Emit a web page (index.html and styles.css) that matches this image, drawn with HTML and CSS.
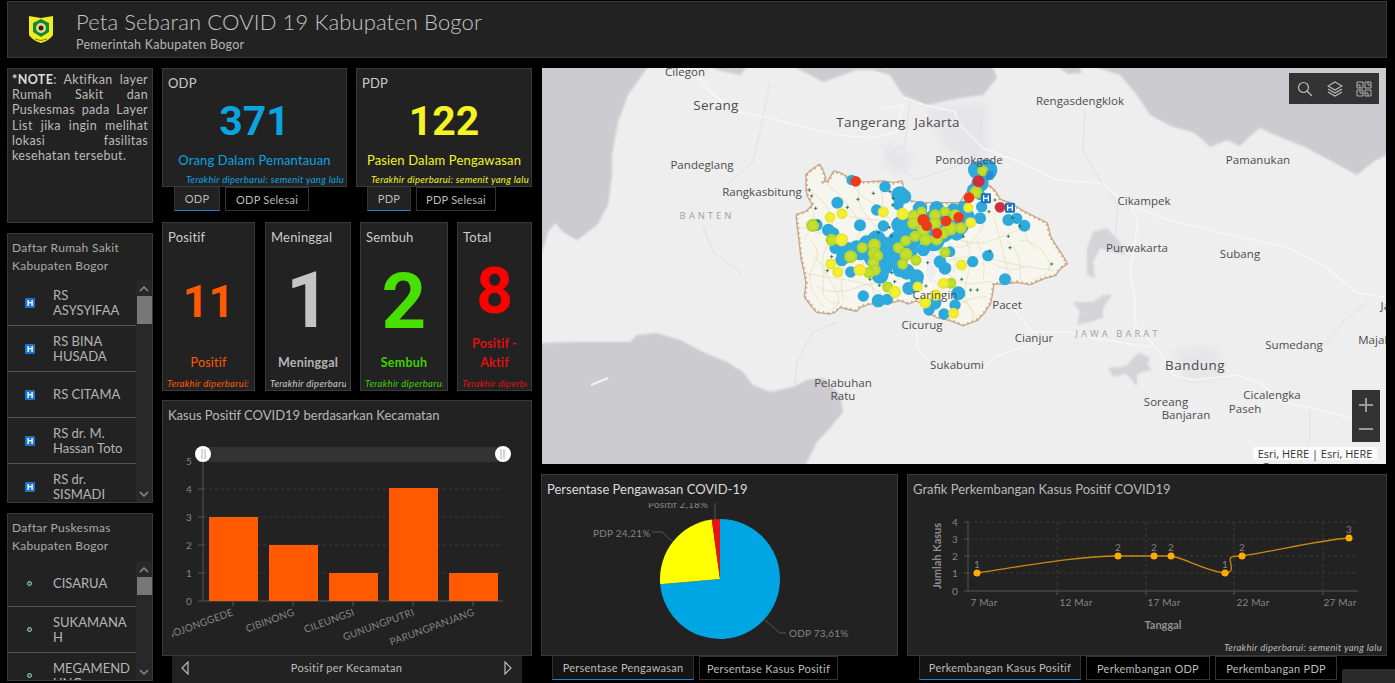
FILE: index.html
```html
<!DOCTYPE html>
<html lang="id">
<head>
<meta charset="utf-8">
<title>Peta Sebaran COVID 19 Kabupaten Bogor</title>
<link rel="stylesheet" href="styles.css">
</head>
<body>
<div class="page">
  <header class="header">
    <svg class="logo" viewBox="0 0 24 29" width="24" height="29">
      <path d="M0 1 L12 3 L24 1 L24 20 Q21 25 12 28 Q3 25 0 20 Z" fill="#f4ec1e"/>
      <path d="M12 4 L20 8 L20 17 L12 22 L4 17 L4 8 Z" fill="#0f8a3c"/>
      <circle cx="12" cy="13" r="5" fill="#e8d98a"/>
      <circle cx="12" cy="13" r="2.5" fill="#33261a"/>
      <path d="M6 24 Q12 27 18 24" stroke="#7a7a1e" stroke-width="1" fill="none"/>
    </svg>
    <div class="header-text">
      <div class="header-title">Peta Sebaran COVID 19 Kabupaten Bogor</div>
      <div class="header-sub">Pemerintah Kabupaten Bogor</div>
    </div>
  </header>
  <main class="main">
    <section class="col-left">
      <div class="panel note"><b>*NOTE</b>: Aktifkan layer Rumah Sakit dan Puskesmas pada Layer List jika ingin melihat lokasi fasilitas kesehatan tersebut.</div>
      <div class="panel list hospital">
        <div class="list-title">Daftar Rumah Sakit Kabupaten Bogor</div>
        <div class="list-body">
          <div class="list-items">
            <div class="item first"><span class="h-icon">H</span><span class="item-text">RS ASYSYIFAA</span></div>
            <div class="item"><span class="h-icon">H</span><span class="item-text">RS BINA HUSADA</span></div>
            <div class="item"><span class="h-icon">H</span><span class="item-text">RS CITAMA</span></div>
            <div class="item"><span class="h-icon">H</span><span class="item-text">RS dr. M. Hassan Toto</span></div>
            <div class="item"><span class="h-icon">H</span><span class="item-text">RS dr. SISMADI</span></div>
          </div>
          <div class="scrollbar">
            <svg class="sb-arrow" viewBox="0 0 10 6" width="10" height="6"><path d="M1 5 L5 1 L9 5" stroke="#888" stroke-width="1.6" fill="none"/></svg>
            <div class="thumb thumb-h"></div>
            <svg class="sb-arrow bottom" viewBox="0 0 10 6" width="10" height="6"><path d="M1 1 L5 5 L9 1" stroke="#888" stroke-width="1.6" fill="none"/></svg>
          </div>
        </div>
      </div>
      <div class="panel list puskesmas">
        <div class="list-title">Daftar Puskesmas Kabupaten Bogor</div>
        <div class="list-body">
          <div class="list-items">
            <div class="item first"><span class="p-icon"></span><span class="item-text">CISARUA</span></div>
            <div class="item"><span class="p-icon"></span><span class="item-text">SUKAMANAH</span></div>
            <div class="item"><span class="p-icon"></span><span class="item-text">MEGAMENDUNG</span></div>
          </div>
          <div class="scrollbar">
            <svg class="sb-arrow" viewBox="0 0 10 6" width="10" height="6"><path d="M1 5 L5 1 L9 5" stroke="#888" stroke-width="1.6" fill="none"/></svg>
            <div class="thumb thumb-p"></div>
            <svg class="sb-arrow bottom" viewBox="0 0 10 6" width="10" height="6"><path d="M1 1 L5 5 L9 1" stroke="#888" stroke-width="1.6" fill="none"/></svg>
          </div>
        </div>
      </div>
    </section>

    <section class="col-mid">
      <div class="kpi-row">
        <div class="kpi kpi-odp">
          <div class="panel kpi-card">
            <div class="card-title">ODP</div>
            <div class="kpi-num c-blue">371</div>
            <div class="kpi-label c-blue">Orang Dalam Pemantauan</div>
            <div class="foot c-blue r">Terakhir diperbarui: semenit yang lalu</div>
          </div>
          <div class="tabs t-odp"><span class="tab active w46">ODP</span><span class="tab w84">ODP Selesai</span></div>
        </div>
        <div class="kpi kpi-pdp">
          <div class="panel kpi-card">
            <div class="card-title">PDP</div>
            <div class="kpi-num c-yellow">122</div>
            <div class="kpi-label c-yellow">Pasien Dalam Pengawasan</div>
            <div class="foot c-yellow r">Terakhir diperbarui: semenit yang lalu</div>
          </div>
          <div class="tabs t-pdp"><span class="tab active w44">PDP</span><span class="tab w80">PDP Selesai</span></div>
        </div>
      </div>
      <div class="stat-row">
        <div class="panel stat s1">
          <div class="card-title">Positif</div>
          <div class="stat-num n1 c-orange">11</div>
          <div class="stat-label c-orange">Positif</div>
          <div class="foot c-orange">Terakhir diperbarui: semenit yang lalu</div>
        </div>
        <div class="panel stat s2">
          <div class="card-title">Meninggal</div>
          <div class="stat-num n2 c-grey">1</div>
          <div class="stat-label bold c-grey2">Meninggal</div>
          <div class="foot c-white">Terakhir diperbarui: semenit yang lalu</div>
        </div>
        <div class="panel stat s3">
          <div class="card-title">Sembuh</div>
          <div class="stat-num n3 c-green">2</div>
          <div class="stat-label bold c-green2">Sembuh</div>
          <div class="foot c-green2">Terakhir diperbarui: semenit yang lalu</div>
        </div>
        <div class="panel stat s4">
          <div class="card-title">Total</div>
          <div class="stat-num n4 c-red">8</div>
          <div class="stat-label bold c-red2">Positif - Aktif</div>
          <div class="foot c-red2">Terakhir diperbarui: semenit yang lalu</div>
        </div>
      </div>
      <div class="panel bar-panel">
        <div class="chart-title">Kasus Positif COVID19 berdasarkan Kecamatan</div>
        <svg class="chart" viewBox="163 440 368 215" width="368" height="215">
          <rect x="203" y="447" width="300" height="15" fill="#333"/>
          <g class="grid">
            <path d="M203 489H503M203 517H503M203 545H503M203 573H503"/>
          </g>
          <path d="M203 462V601H503" stroke="#555" fill="none"/>
          <path d="M198 461H203M198 489H203M198 517H203M198 545H203M198 573H203M198 601H203M233 601v5M293 601v5M353 601v5M413 601v5M473 601v5" stroke="#555" fill="none"/>
          <g fill="#ff5a00">
            <rect x="209" y="517" width="49" height="84"/>
            <rect x="269" y="545" width="49" height="56"/>
            <rect x="329" y="573" width="49" height="28"/>
            <rect x="389" y="488" width="49" height="113"/>
            <rect x="449" y="573" width="49" height="28"/>
          </g>
          <g class="axis-label end">
            <text x="192" y="465">5</text><text x="192" y="493">4</text><text x="192" y="521">3</text><text x="192" y="549">2</text><text x="192" y="577">1</text><text x="192" y="605">0</text>
          </g>
          <clipPath id="barclip"><rect x="172" y="600" width="350" height="50"/></clipPath>
          <g class="axis-label end" clip-path="url(#barclip)">
            <text transform="translate(234 615) rotate(-20)">BOJONGGEDE</text>
            <text transform="translate(295 615) rotate(-20)">CIBINONG</text>
            <text transform="translate(355 615) rotate(-20)">CILEUNGSI</text>
            <text transform="translate(415 615) rotate(-20)">GUNUNGPUTRI</text>
            <text transform="translate(475 615) rotate(-20)">PARUNGPANJANG</text>
          </g>
          <circle cx="203" cy="454" r="8" fill="#fff"/>
          <circle cx="503" cy="454" r="8" fill="#fff"/>
          <path d="M202 449v10M205 449v10M501 449v10M504 449v10" stroke="#aaa"/>
        </svg>
      </div>
      <div class="bar-foot">
        <svg viewBox="0 0 10 14" width="10" height="14"><path d="M8 1 L2 7 L8 13 Z" stroke="#bbb" stroke-width="1.2" fill="none"/></svg>
        <span class="bar-foot-text">Positif per Kecamatan</span>
        <svg viewBox="0 0 10 14" width="10" height="14"><path d="M2 1 L8 7 L2 13 Z" stroke="#bbb" stroke-width="1.2" fill="none"/></svg>
      </div>
    </section>

    <section class="col-right">
      <div class="map">
        <svg class="map-svg" viewBox="542 68 844 396" width="844" height="396">
          <defs>
            <filter id="soft" x="-5%" y="-5%" width="110%" height="110%"><feGaussianBlur stdDeviation="0.8"/></filter>
            <filter id="softer" x="-20%" y="-20%" width="140%" height="140%"><feGaussianBlur stdDeviation="4"/></filter>
          </defs>
          <rect x="542" y="68" width="844" height="396" fill="#eeeeef"/>
          <g class="urban" filter="url(#softer)">
            <path d="M885 145 Q900 140 915 160 L900 175 L885 165 Z"/>
            <path d="M925 110 L985 100 L990 150 L975 165 L945 150 Z"/>
            <path d="M1175 350 L1215 345 L1225 378 L1185 382 Z"/>
          </g>
          <g class="water" filter="url(#soft)">
            <path d="M535 60 L650 60 L647 68 L628 95 L618 122 L612 155 L612 175 L608 205 L597 225 L577 240 L563 232 L555 223 L548 232 L542 252 L535 260 Z"/>
            <path d="M535 343 L573 342 L600 342 L630 342 L637 335 L657 333 L680 340 L703 352 L727 362 L743 372 L753 385 L770 392 L793 387 L807 380 L823 378 L840 395 L843 412 L830 428 L817 442 L803 470 L535 470 Z"/>
            <path d="M797 60 L797 68 L823 82 L857 70 L873 70 L890 75 L903 95 L927 105 L960 98 L983 95 L997 78 L990 60 Z"/>
            <path d="M713 60 L713 68 L722 71 L740 75 L752 60 Z"/>
            <path d="M1060 60 L1060 68 L1068 74 L1082 73 L1076 60 Z"/>
            <path d="M1098 60 L1098 68 L1120 75 L1137 95 L1150 115 L1173 127 L1193 132 L1203 140 L1210 147 L1227 140 L1240 146 L1250 136 L1260 128 L1280 137 L1307 148 L1333 162 L1357 175 L1373 162 L1392 152 L1392 60 Z"/>
          </g>
          <g class="lake" filter="url(#soft)">
            <path d="M1093 232 L1107 228 L1120 242 L1125 255 L1117 253 L1100 248 L1093 262 L1095 278 L1087 275 L1087 248 Z"/>
            <path d="M1073 302 L1093 302 L1103 295 L1112 295 L1103 308 L1103 318 L1090 322 L1077 325 L1080 312 Z"/>
            <path d="M1108 368 L1120 367 L1127 365 L1135 356 L1140 353 L1150 358 L1147 364 L1152 370 L1142 372 L1137 375 L1137 387 L1130 378 L1125 374 L1113 377 Z"/>
          </g>
          <path class="islet" d="M591 385 L608 378"/>
          <g class="border-line">
            <path d="M770 82 L760 132 L753 162 L730 182"/>
            <path d="M703 225 L713 252 L740 272 L741 275"/>
            <path d="M837 322 L813 332 L797 362 L795 385"/>
            <path d="M1085 110 L1083 150 L1100 180 L1118 205 L1115 235"/>
            <path d="M1320 350 L1345 320 L1370 300"/>
            <path d="M1310 410 L1310 440 L1300 464"/>
            <path d="M910 100 L905 145 L885 155 L915 180 L975 160 L983 110"/>
          </g>
          <g class="road">
            <path d="M700 78 L710 92 L737 112 L767 117 L807 128 L840 135 L873 138 L897 132 L903 105 L880 109 M903 98 L925 105 L955 112 L960 125 L983 148"/>
            <path d="M983 148 L1020 162 L1057 180 L1100 183 L1130 205 L1167 220 L1203 228 L1243 238 L1287 247 L1323 265 L1357 293 L1386 297"/>
            <path d="M1130 205 L1138 222 L1130 272 L1135 298 L1135 325 L1157 348 L1173 375 L1193 380 L1237 375 L1263 385 L1283 402 L1313 408 L1350 418"/>
            <path d="M1010 305 L1032 332 L1070 332 L1093 338 L1157 348"/>
            <path d="M1027 345 L993 358 L980 372"/>
            <path d="M917 332 L917 348 L930 362"/>
          </g>
          <g class="region" transform="translate(760 140) scale(.33333)">
            <path id="bogor" class="region-shape" d="M140 105 L150 95 L178 75 L187 90 L195 115 L188 127 L205 125 L222 95 L240 100 L255 108 L270 125 L290 128 L330 127 L370 125 L400 130 L425 125 L430 150 L432 180 L480 190 L600 190 L640 130 L690 140 L705 155 L720 180 L750 190 L790 215 L830 235 L860 250 L870 290 L885 315 L905 345 L920 370 L900 385 L885 405 L850 415 L810 432 L770 425 L730 430 L700 430 L695 465 L690 490 L670 520 L650 540 L610 555 L570 540 L530 530 L500 515 L490 495 L470 480 L445 490 L420 480 L380 490 L330 490 L300 500 L290 512 L260 505 L240 500 L225 515 L210 520 L170 515 L150 490 L135 470 L140 430 L135 400 L125 355 L120 310 L115 270 L110 225 L140 215 L160 195 L145 170 L140 150 Z"/>
            <use href="#bogor" class="region-dash"/>
            <path class="city-hole" d="M465 320 L510 325 L545 360 L530 405 L510 440 L495 400 L500 360 Z"/>
            <g class="district">
              <path d="M140 150 Q190 170 210 220 T200 320 T215 430 T210 510"/>
              <path d="M190 125 Q230 150 260 190 T300 250 T270 340 T250 480"/>
              <path d="M270 125 Q300 170 340 190 T400 260"/>
              <path d="M115 260 Q170 280 230 290 T330 420 T330 490"/>
              <path d="M135 400 Q190 410 260 420 T350 450 T420 480"/>
              <path d="M600 300 Q650 320 700 300 T800 260"/>
              <path d="M570 360 Q640 340 710 360 T880 390"/>
              <path d="M620 300 Q640 360 620 420 T650 530"/>
              <path d="M700 230 Q720 290 730 340 T760 430"/>
              <path d="M560 400 Q610 440 650 430 T700 430"/>
              <path d="M520 420 Q560 470 600 480 T640 540"/>
              <path d="M460 470 Q520 500 560 530"/>
              <path d="M780 300 Q830 300 860 350 T820 420"/>
              <path d="M680 190 Q680 250 650 290 T580 320"/>
              <path d="M240 220 Q300 240 350 240 T420 300"/>
              <path d="M160 350 Q200 370 190 430 T240 490"/>
              <path d="M130 300 Q170 250 160 210"/>
              <path d="M170 440 Q220 470 300 440 T400 470"/>
              <path d="M300 130 Q280 190 330 240 T320 300"/>
              <path d="M350 130 Q380 170 360 220"/>
              <path d="M650 300 Q680 360 670 420"/>
              <path d="M740 300 Q790 340 780 420"/>
              <path d="M590 500 Q620 470 680 470"/>
              <path d="M560 300 Q600 340 580 400"/>
              <path d="M800 240 Q780 290 830 330"/>
              <path d="M700 370 Q740 400 800 380"/>
              <path d="M150 300 Q190 330 160 380 T190 500"/>
            </g>
            <g class="c-b">
              <circle cx="275" cy="120" r="12"/><circle cx="375" cy="140" r="13"/><circle cx="232" cy="188" r="14"/><circle cx="420" cy="165" r="22"/><circle cx="432" cy="170" r="18"/><circle cx="415" cy="195" r="12"/><circle cx="350" cy="210" r="13"/><circle cx="300" cy="256" r="14"/><circle cx="370" cy="258" r="13"/><circle cx="170" cy="255" r="14"/><circle cx="205" cy="270" r="15"/><circle cx="220" cy="280" r="14"/><circle cx="225" cy="325" r="13"/><circle cx="245" cy="360" r="15"/><circle cx="262" cy="330" r="20"/><circle cx="290" cy="325" r="20"/><circle cx="320" cy="310" r="20"/><circle cx="350" cy="300" r="25"/><circle cx="380" cy="320" r="25"/><circle cx="380" cy="350" r="25"/><circle cx="375" cy="380" r="20"/><circle cx="360" cy="405" r="22"/><circle cx="410" cy="300" r="22"/><circle cx="420" cy="255" r="22"/><circle cx="450" cy="265" r="20"/><circle cx="460" cy="300" r="20"/><circle cx="430" cy="340" r="22"/><circle cx="420" cy="390" r="18"/><circle cx="470" cy="410" r="18"/><circle cx="480" cy="205" r="18"/><circle cx="530" cy="205" r="18"/><circle cx="580" cy="210" r="16"/><circle cx="610" cy="200" r="14"/><circle cx="480" cy="260" r="45"/><circle cx="540" cy="255" r="50"/><circle cx="590" cy="250" r="35"/><circle cx="490" cy="330" r="15"/><circle cx="540" cy="365" r="15"/><circle cx="555" cy="385" r="15"/><circle cx="570" cy="335" r="12"/><circle cx="660" cy="235" r="14"/><circle cx="665" cy="200" r="13"/><circle cx="638" cy="365" r="13"/><circle cx="684" cy="347" r="13"/><circle cx="735" cy="418" r="14"/><circle cx="793" cy="257" r="14"/><circle cx="745" cy="240" r="14"/><circle cx="770" cy="235" r="13"/><circle cx="272" cy="396" r="13"/><circle cx="310" cy="468" r="13"/><circle cx="355" cy="482" r="16"/><circle cx="382" cy="478" r="13"/><circle cx="447" cy="445" r="16"/><circle cx="507" cy="510" r="13"/><circle cx="552" cy="522" r="13"/><circle cx="585" cy="495" r="13"/><circle cx="595" cy="460" r="17"/><circle cx="525" cy="490" r="15"/><circle cx="665" cy="100" r="25"/><circle cx="660" cy="130" r="22"/><circle cx="680" cy="90" r="28"/><circle cx="650" cy="90" r="22"/><circle cx="640" cy="150" r="15"/><circle cx="660" cy="165" r="12"/><circle cx="255" cy="345" r="22"/><circle cx="300" cy="335" r="22"/><circle cx="400" cy="360" r="25"/><circle cx="400" cy="330" r="25"/><circle cx="345" cy="350" r="30"/><circle cx="450" cy="330" r="20"/><circle cx="440" cy="395" r="20"/><circle cx="470" cy="425" r="15"/><circle cx="430" cy="280" r="25"/><circle cx="520" cy="300" r="30"/><circle cx="590" cy="280" r="18"/><circle cx="620" cy="230" r="20"/>
            </g>
            <g class="c-g">
              <circle cx="158" cy="256" r="16"/><circle cx="215" cy="300" r="15"/><circle cx="307" cy="323" r="13"/><circle cx="272" cy="350" r="16"/><circle cx="343" cy="315" r="16"/><circle cx="343" cy="340" r="16"/><circle cx="353" cy="347" r="13"/><circle cx="340" cy="368" r="14"/><circle cx="345" cy="390" r="14"/><circle cx="327" cy="398" r="14"/><circle cx="415" cy="323" r="13"/><circle cx="438" cy="343" r="16"/><circle cx="428" cy="372" r="13"/><circle cx="468" cy="361" r="13"/><circle cx="437" cy="302" r="13"/><circle cx="465" cy="289" r="13"/><circle cx="497" cy="299" r="15"/><circle cx="530" cy="298" r="15"/><circle cx="555" cy="337" r="13"/><circle cx="573" cy="430" r="13"/><circle cx="383" cy="441" r="13"/><circle cx="460" cy="228" r="15"/><circle cx="460" cy="250" r="15"/><circle cx="485" cy="215" r="12"/><circle cx="490" cy="270" r="16"/><circle cx="525" cy="225" r="14"/><circle cx="525" cy="250" r="15"/><circle cx="555" cy="215" r="12"/><circle cx="570" cy="265" r="18"/><circle cx="585" cy="225" r="14"/><circle cx="603" cy="264" r="14"/><circle cx="548" cy="280" r="15"/><circle cx="648" cy="157" r="16"/><circle cx="668" cy="92" r="13"/>
            </g>
            <g class="c-y">
              <circle cx="210" cy="232" r="13"/><circle cx="246" cy="221" r="13"/><circle cx="245" cy="299" r="16"/><circle cx="212" cy="372" r="13"/><circle cx="233" cy="396" r="13"/><circle cx="299" cy="390" r="15"/><circle cx="370" cy="216" r="13"/><circle cx="428" cy="222" r="15"/><circle cx="632" cy="248" r="13"/><circle cx="625" cy="203" r="12"/><circle cx="605" cy="375" r="13"/><circle cx="550" cy="430" r="13"/><circle cx="473" cy="440" r="12"/><circle cx="405" cy="456" r="15"/><circle cx="495" cy="487" r="15"/><circle cx="527" cy="465" r="14"/><circle cx="581" cy="520" r="13"/>
            </g>
            <g class="c-r">
              <circle cx="287" cy="124" r="13"/><circle cx="490" cy="240" r="15"/><circle cx="500" cy="257" r="13"/><circle cx="558" cy="243" r="13"/><circle cx="596" cy="232" r="13"/><circle cx="531" cy="280" r="13"/><circle cx="627" cy="173" r="13"/>
            </g>
            <g class="c-dr">
              <circle cx="656" cy="124" r="15"/><circle cx="720" cy="202" r="13"/>
            </g>
            <g class="plus">
              <path d="M148 150m-5 0h10m-5 -5v10M155 168m-5 0h10m-5 -5v10M167 205m-5 0h10m-5 -5v10M262 202m-5 0h10m-5 -5v10M294 178m-5 0h10m-5 -5v10M340 160m-5 0h10m-5 -5v10M390 155m-5 0h10m-5 -5v10M400 175m-5 0h10m-5 -5v10M398 195m-5 0h10m-5 -5v10M175 243m-5 0h10m-5 -5v10M355 278m-5 0h10m-5 -5v10M395 288m-5 0h10m-5 -5v10M215 350m-5 0h10m-5 -5v10M202 392m-5 0h10m-5 -5v10M330 418m-5 0h10m-5 -5v10M358 436m-5 0h10m-5 -5v10M395 398m-5 0h10m-5 -5v10M404 425m-5 0h10m-5 -5v10M498 438m-5 0h10m-5 -5v10M503 368m-5 0h10m-5 -5v10M610 290m-5 0h10m-5 -5v10M745 289m-5 0h10m-5 -5v10M750 323m-5 0h10m-5 -5v10M690 333m-5 0h10m-5 -5v10M605 418m-5 0h10m-5 -5v10M632 450m-5 0h10m-5 -5v10M652 450m-5 0h10m-5 -5v10M875 372m-5 0h10m-5 -5v10M687 215m-5 0h10m-5 -5v10M705 180m-5 0h10m-5 -5v10M758 233m-5 0h10m-5 -5v10M780 258m-5 0h10m-5 -5v10M388 262m-5 0h10m-5 -5v10"/>
            </g>
            <g class="h-mark">
              <rect x="678" y="92" width="22" height="28" rx="3" opacity=".5"/>
              <rect x="663" y="160" width="30" height="30" rx="3"/>
              <rect x="735" y="188" width="30" height="30" rx="3"/>
              <path d="M671 166v18M685 166v18M671 175h14M743 194v18M757 194v18M743 203h14"/>
            </g>
          </g>
          <g class="lbl">
            <text x="685" y="76">Cilegon</text>
            <text class="big" x="716" y="110">Serang</text>
            <text class="big" x="871" y="127">Tangerang</text>
            <text class="big" x="937" y="127">Jakarta</text>
            <text x="702" y="169">Pandeglang</text>
            <text x="762" y="196">Rangkasbitung</text>
            <text x="969" y="164">Pondokgede</text>
            <text x="1080" y="105">Rengasdengklok</text>
            <text x="1258" y="164">Pamanukan</text>
            <text x="1144" y="205">Cikampek</text>
            <text x="1137" y="252">Purwakarta</text>
            <text x="1240" y="258">Subang</text>
            <text x="1007" y="309">Pacet</text>
            <text x="1034" y="342">Cianjur</text>
            <text x="922" y="329">Cicurug</text>
            <text x="957" y="369">Sukabumi</text>
            <text x="935" y="299">Caringin</text>
            <text class="bigger" x="1195" y="370">Bandung</text>
            <text x="1294" y="349">Sumedang</text>
            <text x="1272" y="399">Cicalengka</text>
            <text x="1245" y="413">Paseh</text>
            <text x="1166" y="406">Soreang</text>
            <text x="1186" y="419">Banjaran</text>
            <text x="843" y="387">Pelabuhan</text>
            <text x="843" y="400">Ratu</text>
            <text x="1389" y="344">Majalengka</text>
            <text x="1408" y="310">Jatibarang</text>
            <text x="1277" y="471">Garut</text>
            <text class="region-lbl" x="707" y="219">BANTEN</text>
            <text class="region-lbl" x="1118" y="337">JAWA BARAT</text>
          </g>
        </svg>
        <div class="map-tools">
          <svg viewBox="0 0 16 16" width="16" height="16"><circle cx="6.5" cy="6.5" r="5" class="ico"/><path d="M10 10 L15 15" class="ico"/></svg>
          <svg viewBox="0 0 16 16" width="16" height="16"><path d="M8 1 L15 5 L8 9 L1 5 Z M1 8 L8 12 L15 8 M1 11 L8 15 L15 11" class="ico"/></svg>
          <svg viewBox="0 0 16 16" width="16" height="16"><path d="M1 1h6v6H1zM9 1h6v6H9zM1 9h6v6H1zM9 9h6v6H9zM1 4h3v3M12 1v3h3M4 9v3h3M9 12h3v3" class="ico thin"/></svg>
        </div>
        <div class="zoom-ctl">
          <svg viewBox="0 0 28 52" width="28" height="52"><path d="M14 8v14M7 15h14M7 39h14" stroke="#999" stroke-width="2" fill="none"/></svg>
        </div>
        <div class="attribution">Esri, HERE | Esri, HERE</div>
      </div>
      <div class="bottom-row">
        <div class="chart-block pie-block">
          <div class="panel bottom-panel">
            <div class="chart-title bright">Persentase Pengawasan COVID-19</div>
            <svg class="chart" viewBox="542 503 355 152" width="355" height="152">
              <path d="M720 579 L720 519 A60 60 0 1 1 660.2 584.2 Z" fill="#00a5e3"/>
              <path d="M720 579 L660.2 584.2 A60 60 0 0 1 711.8 519.6 Z" fill="#ffff00"/>
              <path d="M720 579 L711.8 519.6 A60 60 0 0 1 720 519 Z" fill="#ee1111"/>
              <path d="M715 503V520M652 532H662L672 541M765 620L780 633H786" stroke="#555" fill="none"/>
              <g class="axis-label">
                <text x="593" y="537">PDP 24,21%</text>
                <text x="789" y="637">ODP 73,61%</text>
                <text x="648" y="508">Positif 2,18%</text>
              </g>
            </svg>
          </div>
          <div class="tabs t-pie"><span class="tab active w142">Persentase Pengawasan</span><span class="tab w139">Persentase Kasus Positif</span></div>
        </div>
        <div class="chart-block line-block">
          <div class="panel bottom-panel">
            <div class="chart-title">Grafik Perkembangan Kasus Positif COVID19</div>
            <svg class="chart" viewBox="908 503 478 152" width="478" height="152">
              <path class="grid" d="M968 522H1358M968 539H1358M968 556H1358M968 573H1358M1057 522V591M1146 522V591M1234 522V591M1323 522V591"/>
              <path d="M968 522V591H1358" stroke="#555" fill="none"/>
              <path d="M964 522h4M964 539h4M964 556h4M964 573h4M964 591h4M1057 591v4M1146 591v4M1234 591v4M1323 591v4" stroke="#555" fill="none"/>
              <path d="M977 573 C1030 565 1080 556 1118 556 L1171 556 C1185 558 1205 571 1225 573 C1238 573 1226 558 1232 557 C1235 556 1238 556 1242 556 C1280 550 1320 540 1349 538" stroke="#c98a10" stroke-width="1.3" fill="none"/>
              <g fill="#ffab00">
                <circle cx="977" cy="573" r="3.5"/><circle cx="1118" cy="556" r="3.5"/><circle cx="1154" cy="556" r="3.5"/><circle cx="1171" cy="556" r="3.5"/><circle cx="1225" cy="573" r="3.5"/><circle cx="1242" cy="556" r="3.5"/><circle cx="1349" cy="538" r="3.5"/>
              </g>
              <g class="axis-label mid">
                <text x="977" y="568">1</text><text x="1118" y="551">2</text><text x="1154" y="551">2</text><text x="1171" y="551">2</text><text x="1225" y="568">1</text><text x="1242" y="551">2</text><text x="1349" y="533">3</text>
                <text x="984" y="606">7 Mar</text><text x="1076" y="606">12 Mar</text><text x="1164" y="606">17 Mar</text><text x="1253" y="606">22 Mar</text><text x="1340" y="606">27 Mar</text>
              </g>
              <g class="axis-label end">
                <text x="958" y="526">4</text><text x="958" y="543">3</text><text x="958" y="560">2</text><text x="958" y="577">1</text><text x="958" y="595">0</text>
              </g>
              <text class="axis-title" x="1163" y="629">Tanggal</text>
              <text class="axis-title" transform="translate(941 556) rotate(-90)">Jumlah Kasus</text>
              <text class="foot-svg" x="1382" y="651">Terakhir diperbarui: semenit yang lalu</text>
            </svg>
          </div>
          <div class="tabs t-line"><span class="tab active w162">Perkembangan Kasus Positif</span><span class="tab w124">Perkembangan ODP</span><span class="tab w122">Perkembangan PDP</span></div>
        </div>
      </div>
    </section>
  </main>
  <div class="corner-box"></div>
</div>
</body>
</html>
```
FILE: styles.css
```css
* { box-sizing: border-box; }
html, body { margin: 0; padding: 0; background: #000; }
body { font-family: "Lato", "Liberation Sans", sans-serif; color: #ccc; }
.page { position: relative; width: 1395px; height: 683px; overflow: hidden; padding: 1px 8px 0 7px; }
.panel { background: #222; border: 1px solid #3a3a3a; }

.header { height: 57px; background: #222; border: 1px solid #3a3a3a; display: flex; align-items: flex-start; margin-bottom: 10px; }
.logo { margin: 13px 0 0 21px; flex: none; }
.header-text { margin-left: 23px; }
.header-title { font-size: 22px; line-height: 26px; margin-top: 7px; font-weight: 300; letter-spacing: .12px; color: #c4c4c4; }
.header-sub { font-size: 12.5px; line-height: 16px; margin-top: 2px; letter-spacing: .25px; color: #b5b5b5; }

.main { display: grid; grid-template-columns: 146px 370px 846px; column-gap: 9px; height: 615px; }
.col-left { display: flex; flex-direction: column; gap: 10px; }
.note { height: 155px; padding: 3px 4px 0 4px; font-size: 12.5px; line-height: 15.2px; text-align: justify; letter-spacing: .35px; color: #bbb; }
.note b { color: #ddd; }
.list { display: flex; flex-direction: column; overflow: hidden; }
.hospital { height: 270px; }
.puskesmas { height: 168px; }
.list-title { padding: 5px 4px 0 4px; font-size: 12px; line-height: 18px; letter-spacing: .3px; color: #aaa; height: 46px; flex: none; }
.list-body { flex: 1; display: flex; min-height: 0; }
.list-items { flex: 1; min-width: 0; overflow: hidden; }
.item { height: 46px; display: flex; align-items: center; border-bottom: 1px solid #555; padding-left: 17px; flex: none; }
.item-text { width: 78px; margin-left: 18px; font-size: 13px; line-height: 15px; word-break: break-word; color: #b4b4b4; }
.h-icon { flex: none; width: 10px; height: 10px; background: #1a73c8; border-radius: 1px; color: #fff; font: bold 9px/10px "Liberation Sans", sans-serif; text-align: center; }
.p-icon { flex: none; width: 5px; height: 5px; margin: 0 3px 0 2px; border-radius: 50%; border: 1.5px solid #9ad0a8; background: #3a5a40; }
.puskesmas .list-title { height: 47px; }
.puskesmas .item-text { margin-left: 18px; }
.scrollbar { flex: none; width: 16px; background: #282828; display: flex; flex-direction: column; align-items: center; padding-top: 6px; position: relative; }
.sb-arrow { flex: none; }
.sb-arrow.bottom { margin-top: auto; margin-bottom: 5px; }
.thumb { width: 15px; background: #777; flex: none; margin-top: 4px; }
.thumb-h { height: 28px; }
.thumb-p { height: 18px; }

.col-mid { display: flex; flex-direction: column; }
.kpi-row { display: flex; gap: 9px; height: 143px; margin-bottom: 11px; }
.kpi-odp { width: 185px; }
.kpi-pdp { width: 176px; }
.kpi-card { height: 119px; padding: 0 5px; overflow: hidden; position: relative; display: flex; flex-direction: column; }
.card-title { font-size: 13px; line-height: 16px; margin-top: 6px; flex: none; color: #ccc; letter-spacing: .2px; }
.kpi-num { font: 700 41px/47px "Roboto", sans-serif; text-align: center; margin-top: 7px; }
.kpi-label { font-size: 13px; line-height: 16px; text-align: center; margin-top: 7px; white-space: nowrap; letter-spacing: .15px; }
.foot { font-size: 9.5px; line-height: 12px; font-style: italic; white-space: nowrap; overflow: hidden; letter-spacing: .3px; }
.foot.r { text-align: right; margin-top: 6px; margin-right: -3px; margin-left: -3px; }
.c-blue { color: #0aa4e0; }
.c-yellow { color: #f4f422; }
.c-orange { color: #ff5a00; }
.c-grey { color: #c4c4c4; }
.c-grey2 { color: #b4b4b4; }
.c-white { color: #ccc; }
.c-green { color: #48e000; }
.c-green2 { color: #3fd000; }
.c-red { color: #ff0000; }
.c-red2 { color: #e01010; }

.tabs { display: flex; gap: 5px; height: 24px; font-size: 11px; }
.t-odp { padding-left: 12px; }
.t-pdp { padding-left: 11px; }
.t-pie { padding-left: 11px; }
.t-line { padding-left: 12px; }
.tab { display: flex; align-items: center; justify-content: center; background: #000; border: 1px solid #333; color: #bbb; white-space: nowrap; letter-spacing: .25px; }
.tab.active { background: #222; border-top: 0; border-bottom: 1px solid #2a7fd0; }
.t-pie .tab.active, .t-line .tab.active { background: #141414; }
.w44 { width: 44px; } .w46 { width: 46px; } .w80 { width: 80px; } .w84 { width: 84px; }
.w122 { width: 122px; } .w124 { width: 124px; } .w139 { width: 139px; } .w142 { width: 142px; } .w162 { width: 162px; }

.stat-row { display: flex; height: 169px; margin-bottom: 9px; }
.stat { display: flex; flex-direction: column; padding: 0 5px; overflow: hidden; }
.s1 { width: 93px; margin-right: 10px; }
.s2 { width: 86px; margin-right: 9px; }
.s3 { width: 88px; margin-right: 9px; }
.s4 { width: 75px; }
.stat-num { flex: 1; display: flex; align-items: center; justify-content: center; font-family: "Roboto", sans-serif; font-weight: 700; min-height: 0; padding-top: 4px; }
.n1 { font-size: 45px; }
.n2 { font-size: 77px; }
.n3 { font-size: 78px; }
.n4 { font-size: 64px; }
.stat-label { font-size: 12.5px; line-height: 19px; text-align: center; margin-bottom: 6px; flex: none; letter-spacing: .2px; }
.bold { font-weight: 700; }
.stat .foot { margin: 0 -1px 0 -1px; flex: none; height: 12px; }

.bar-panel { height: 256px; flex: none; }
.chart-title { font-size: 13px; line-height: 16px; padding: 6px 5px 0 5px; height: 28px; letter-spacing: 0; color: #b8b8b8; }
.chart-title.bright { color: #dcdcdc; }
.bar-panel .chart-title { height: 39px; }
.chart { display: block; }
.bar-foot { width: 350px; margin-left: 10px; height: 27px; background: #222; display: flex; align-items: center; justify-content: space-between; padding: 0 9px 4px 8px; font-size: 11px; letter-spacing: .3px; color: #bbb; }
.grid { stroke: #3a3a3a; stroke-dasharray: 3 3; fill: none; }
.grid path { stroke: #3a3a3a; }
.axis-label { font-family: "Lato", sans-serif; font-size: 10px; fill: #858585; letter-spacing: .2px; }
.axis-label.end { text-anchor: end; }
.axis-label.mid { text-anchor: middle; }
.axis-title { font-family: "Lato", sans-serif; font-size: 11px; font-weight: 700; fill: #8f8f8f; text-anchor: middle; }
.foot-svg { font-family: "Lato", sans-serif; font-size: 9.5px; font-style: italic; fill: #bbb; text-anchor: end; letter-spacing: .3px; }

.col-right { display: flex; flex-direction: column; }
.map { position: relative; width: 844px; height: 396px; margin: 0 1px 10px 1px; overflow: hidden; flex: none; }
.map-svg { display: block; }
.water { fill: #cbcbd0; }
.lake { fill: #d4d4d8; }
.urban { fill: #e6e6e8; }
.islet { stroke: #f2f2f2; stroke-width: 2; }
.border-line path { stroke: #e0e0e4; stroke-width: 1; fill: none; }
.road path { stroke: #f9f9f9; stroke-width: 1.2; fill: none; }
.region-shape { fill: #f6f5ee; stroke: #c9a78a; stroke-width: 8; stroke-linejoin: round; }
.region-dash { fill: none; stroke: #9c6d45; stroke-width: 4; stroke-dasharray: 4 11; }
.city-hole { fill: #eeeeef; stroke: #fff; stroke-width: 3; }
.district path { stroke: #ddd6a8; stroke-width: 1.6; fill: none; }
.c-b circle { fill: #2ea9dc; stroke: #2ea9dc; stroke-width: 8; }
.c-g circle { fill: #c4e02a; stroke: #b8d430; stroke-width: 7; }
.c-y circle { fill: #f5f02c; stroke: #ecE63a; stroke-width: 7; }
.c-r circle { fill: #ee3a1a; stroke: #ee3a1a; stroke-width: 6; }
.c-dr circle { fill: #d22f3c; stroke: #d22f3c; stroke-width: 6; }
.plus path { stroke: #1f6f3f; stroke-width: 2.5; fill: none; }
.h-mark rect { fill: #1a73c8; }
.h-mark path { stroke: #fff; stroke-width: 4; fill: none; }
.lbl text { font-family: "Open Sans", sans-serif; font-size: 11.5px; fill: #4c4c4c; text-anchor: middle; letter-spacing: .05px; }
.lbl .big { font-size: 13.5px; letter-spacing: .3px; }
.lbl .bigger { font-size: 13.5px; letter-spacing: .5px; }
.lbl .region-lbl { font-size: 9.5px; letter-spacing: 3px; fill: #a2a2a2; }

.map-tools { position: absolute; top: 5px; right: 7px; width: 90px; height: 31px; background: #333; display: flex; align-items: center; justify-content: space-between; padding: 0 7px 0 8px; }
.ico { stroke: #bbb; stroke-width: 1.2; fill: none; }
.ico.thin { stroke-width: .9; }
.zoom-ctl { position: absolute; top: 322px; right: 6px; width: 28px; height: 52px; background: #333; }
.zoom-ctl svg { display: block; }
.attribution { position: absolute; top: 379px; right: 9px; width: 124px; height: 13px; background: rgba(255,255,255,.75); font: 11px/13px "Open Sans", sans-serif; color: #333; text-align: center; white-space: nowrap; }

.bottom-row { display: flex; gap: 9px; }
.pie-block { width: 357px; }
.line-block { width: 480px; }
.bottom-panel { height: 182px; overflow: hidden; }
.corner-box { position: absolute; left: 1342px; top: 669px; width: 53px; height: 14px; background: #2b2b2b; border-radius: 3px 0 0 0; }
```
